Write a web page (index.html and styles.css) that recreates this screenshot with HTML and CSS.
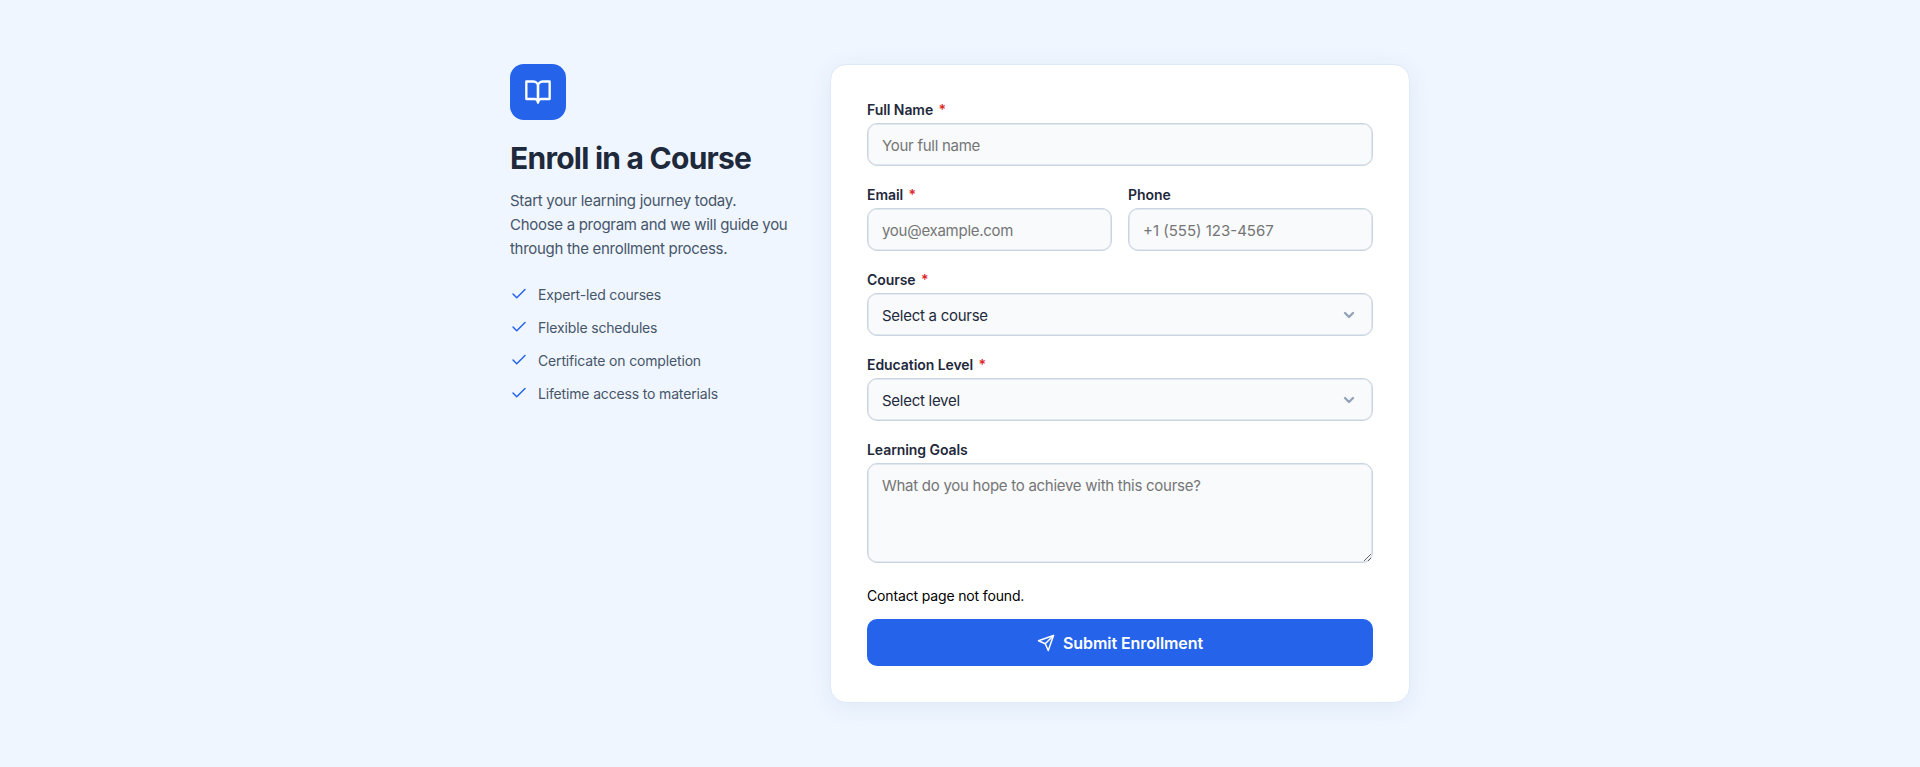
FILE: index.html
```
<!DOCTYPE html>
<html lang="en">
<head>
  <meta charset="UTF-8" />
  <meta name="viewport" content="width=device-width, initial-scale=1.0"/>
  <title>Enroll in a Course</title>
  <link rel="stylesheet" href="styles.css">
</head>
<body>
  <main class="container">
    <aside class="intro">
      <div class="intro-icon">
        <svg width="28" height="28" viewBox="0 0 24 24" fill="none" stroke="currentColor" stroke-width="2" stroke-linecap="round" stroke-linejoin="round">
          <path d="M2 3h6a4 4 0 0 1 4 4v14a3 3 0 0 0-3-3H2z"/>
          <path d="M22 3h-6a4 4 0 0 0-4 4v14a3 3 0 0 1 3-3h7z"/>
        </svg>
      </div>
      <h1>Enroll in a Course</h1>
      <p>Start your learning journey today. Choose a program and we will guide you through the enrollment process.</p>
      <ul class="features">
        <li><svg width="18" height="18" viewBox="0 0 24 24"><polyline points="20 6 9 17 4 12"/></svg>Expert-led courses</li>
        <li><svg width="18" height="18" viewBox="0 0 24 24"><polyline points="20 6 9 17 4 12"/></svg>Flexible schedules</li>
        <li><svg width="18" height="18" viewBox="0 0 24 24"><polyline points="20 6 9 17 4 12"/></svg>Certificate on completion</li>
        <li><svg width="18" height="18" viewBox="0 0 24 24"><polyline points="20 6 9 17 4 12"/></svg>Lifetime access to materials</li>
      </ul>
    </aside>

    <form class="card">
      <div class="field">
        <label for="name">Full Name <span class="required">*</span></label>
        <input type="text" id="name" placeholder="Your full name" />
      </div>

      <div class="row">
        <div class="field">
          <label for="email">Email <span class="required">*</span></label>
          <input type="email" id="email" placeholder="you@example.com" />
        </div>
        <div class="field">
          <label for="phone">Phone</label>
          <input type="tel" id="phone" placeholder="+1 (555) 123-4567" />
        </div>
      </div>

      <div class="field">
        <label for="course">Course <span class="required">*</span></label>
        <select id="course">
          <option value="">Select a course</option>
        </select>
      </div>

      <div class="field">
        <label for="level">Education Level <span class="required">*</span></label>
        <select id="level">
          <option value="">Select level</option>
        </select>
      </div>

      <div class="field">
        <label for="goals">Learning Goals</label>
        <textarea id="goals" placeholder="What do you hope to achieve with this course?"></textarea>
      </div>

      <div class="message">Contact page not found.</div>

      <button type="button">
        <svg width="18" height="18" viewBox="0 0 24 24" fill="none" stroke="currentColor" stroke-width="2" stroke-linecap="round" stroke-linejoin="round">
          <line x1="22" y1="2" x2="11" y2="13"/>
          <polygon points="22 2 15 22 11 13 2 9 22 2"/>
        </svg>
        Submit Enrollment
      </button>
    </form>
  </main>
</body>
</html>
```
FILE: styles.css
```
* {
  box-sizing: border-box;
}
body {
  margin: 0;
  min-height: 100vh;
  padding: 64px 24px;
  background: #eff6ff;
  font-family: Inter, sans-serif;
  color: #1e293b;
}
.container {
  max-width: 900px;
  margin: 0 auto;
  display: grid;
  grid-template-columns: 280px 580px;
  gap: 40px;
  align-items: start;
}
.intro-icon {
  width: 56px;
  height: 56px;
  margin-bottom: 20px;
  border-radius: 14px;
  background: #2563eb;
  color: #fff;
  display: flex;
  align-items: center;
  justify-content: center;
}
.intro h1 {
  margin: 0 0 13px;
  font-size: 30px;
  line-height: 36px;
  font-weight: 700;
  letter-spacing: -0.75px;
}
.intro p {
  margin: 0 0 23px;
  font-size: 15px;
  line-height: 24px;
  letter-spacing: -0.29px;
  color: #475569;
}
.features {
  list-style: none;
  margin: 0;
  padding: 0;
  display: flex;
  flex-direction: column;
  gap: 12px;
}
.features li {
  display: flex;
  align-items: center;
  gap: 10px;
  font-size: 14px;
  line-height: 21px;
  letter-spacing: -0.16px;
  color: #475569;
}
.features svg {
  margin-bottom: 2px;
  fill: none;
  stroke: #2563eb;
  stroke-width: 2;
  stroke-linecap: round;
  stroke-linejoin: round;
}
.card {
  height: 639px;
  padding: 36px;
  background: #fff;
  border: 1px solid #dfe9f8;
  border-radius: 16px;
  box-shadow: 0 4px 24px rgba(30, 58, 138, 0.07);
}
.row {
  display: grid;
  grid-template-columns: 1fr 1fr;
  gap: 16px;
}
.field {
  margin-bottom: 20px;
}
label {
  display: block;
  margin-bottom: 5px;
  font-size: 14px;
  line-height: 17px;
  font-weight: 600;
  letter-spacing: -0.07px;
}
.required {
  margin-left: 2px;
  color: #dc2626;
}
input, select, textarea {
  display: block;
  width: 100%;
  height: 43px;
  padding: 2px 14px 0;
  border: 1px solid #cbd5e1;
  border-radius: 10px;
  background: #f8fafc;
  box-shadow: inset 0 0 0 0.5px #cbd5e1;
  color: #1e293b;
  font-family: inherit;
  font-size: 15px;
  letter-spacing: -0.27px;
}
input[type="tel"] {
  letter-spacing: 0;
}
input::placeholder, textarea::placeholder {
  color: #757575;
}
select {
  appearance: none;
  background: #f8fafc url("data:image/svg+xml,%3Csvg xmlns='http://www.w3.org/2000/svg' width='12' height='8' viewBox='0 0 12 8' fill='none' stroke='%2394a3b8' stroke-width='2.4' stroke-linecap='round' stroke-linejoin='round'%3E%3Cpath d='M2 2l4 4 4-4'/%3E%3C/svg%3E") no-repeat right 17px center;
}
textarea {
  height: 100px;
  padding: 13px 14px;
  line-height: 18px;
  resize: vertical;
}
.message {
  margin-bottom: 14px;
  padding-top: 4px;
  font-size: 14px;
  line-height: 18px;
  letter-spacing: -0.15px;
  color: #000;
}
button {
  width: 100%;
  height: 47px;
  display: flex;
  align-items: center;
  justify-content: center;
  gap: 8px;
  border: none;
  border-radius: 10px;
  background: #2563eb;
  color: #fff;
  font-family: inherit;
  font-size: 16px;
  font-weight: 600;
  letter-spacing: -0.08px;
  cursor: pointer;
}
button:hover {
  background: #1d4ed8;
}
```
